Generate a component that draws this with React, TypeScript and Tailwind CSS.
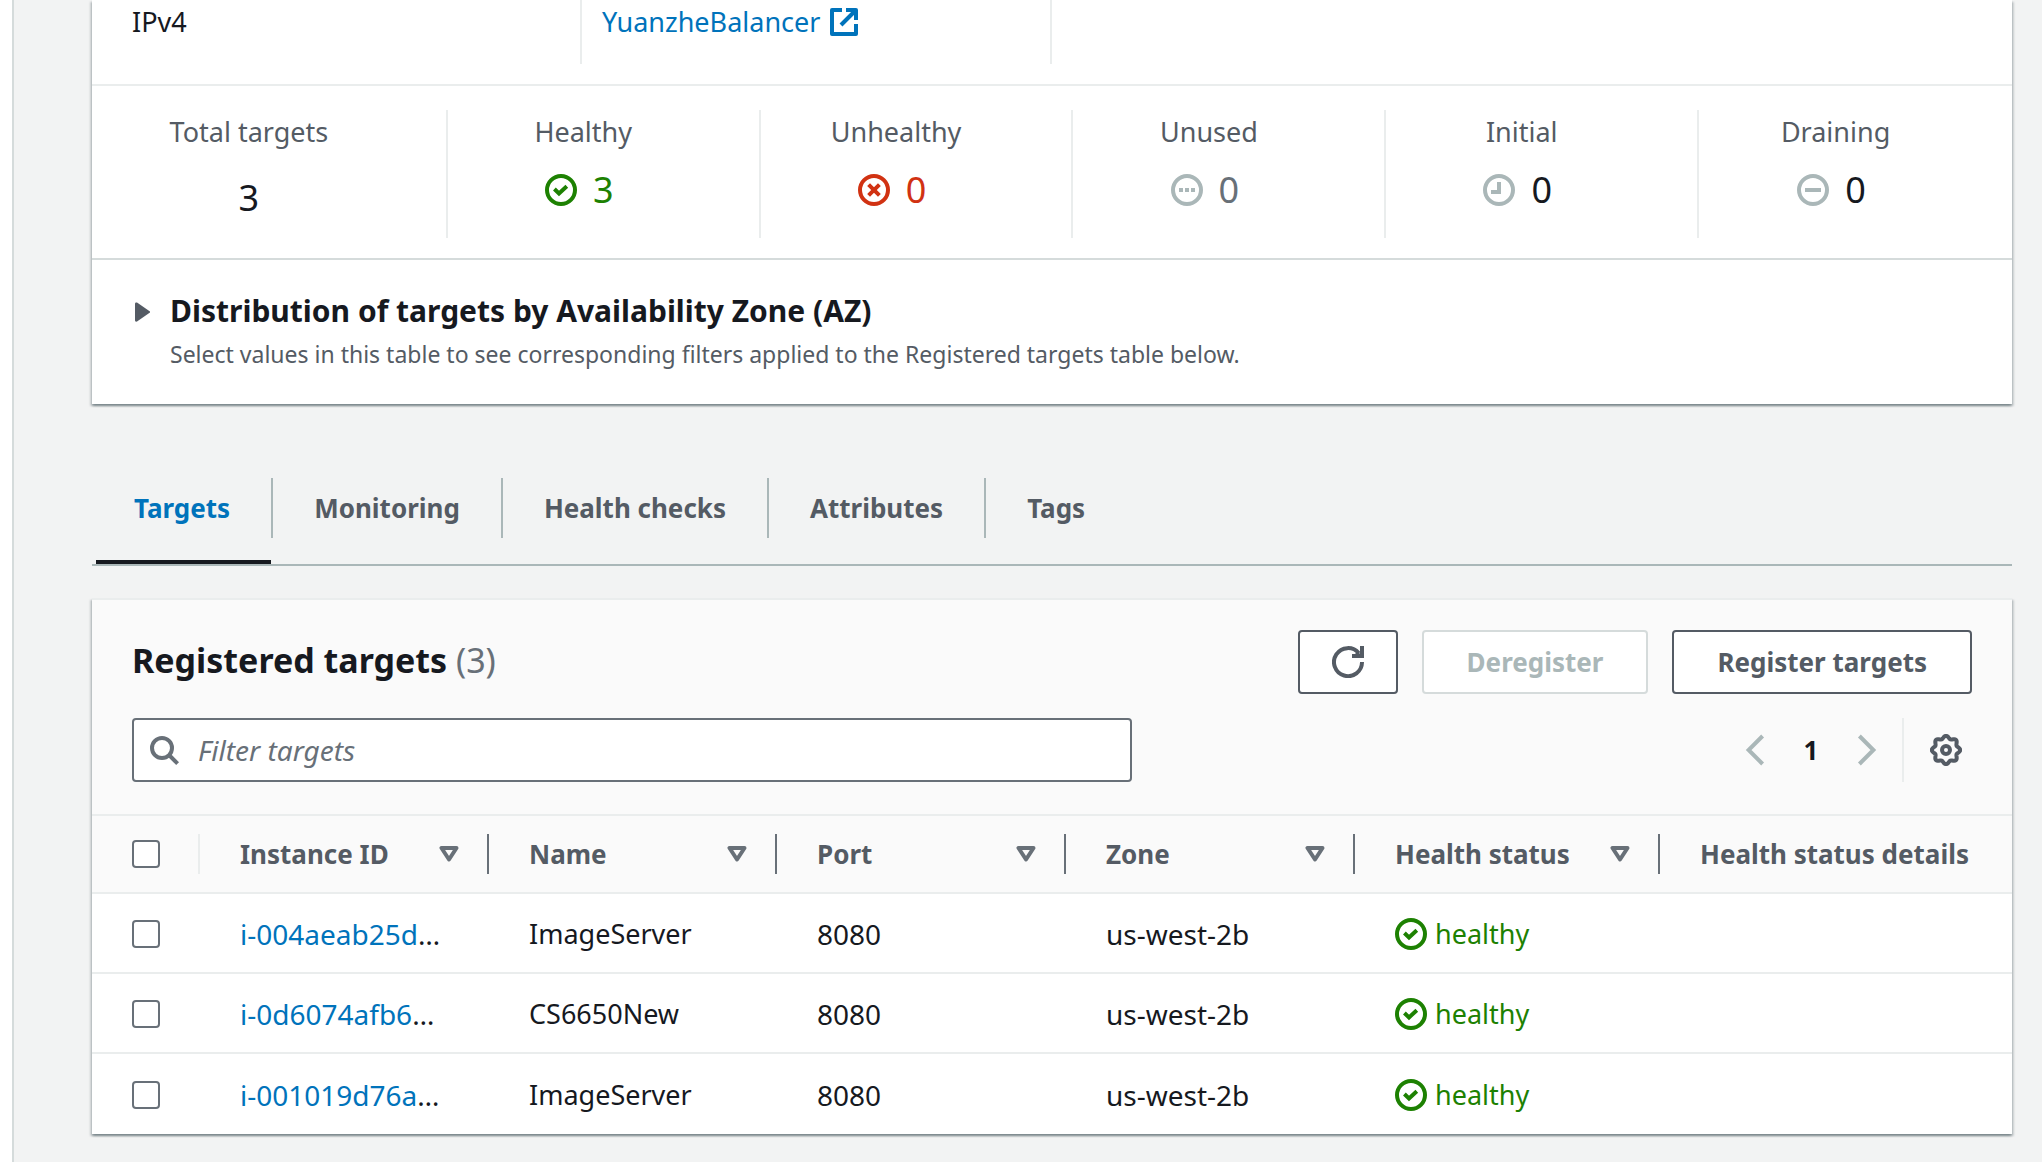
import React, { ReactNode } from "react";

const stats: { label: string; value: string; color: string; icon?: ReactNode }[] = [
  { label: "Total targets", value: "3", color: "pt-2 text-[#16191f]" },
  { label: "Healthy", value: "3", color: "pr-2 text-[#1d8102]", icon: <CheckCircle /> },
  { label: "Unhealthy", value: "0", color: "pr-2 text-[#d13212]", icon: <CrossCircle /> },
  { label: "Unused", value: "0", color: "pr-2 text-[#687078]", icon: <DotsCircle /> },
  { label: "Initial", value: "0", color: "pr-2 text-[#16191f]", icon: <ClockCircle /> },
  { label: "Draining", value: "0", color: "pr-2 text-[#16191f]", icon: <MinusCircle /> },
];

const rows = [
  { id: "i-004aeab25d", name: "ImageServer", port: "8080", zone: "us-west-2b", status: "healthy" },
  { id: "i-0d6074afb6", name: "CS6650New", port: "8080", zone: "us-west-2b", status: "healthy" },
  { id: "i-001019d76a", name: "ImageServer", port: "8080", zone: "us-west-2b", status: "healthy" },
];

const tabs = ["Targets", "Monitoring", "Health checks", "Attributes", "Tags"];

const columns = [
  { label: "Instance ID", width: "w-[289px]" },
  { label: "Name", width: "w-[288px]" },
  { label: "Port", width: "w-[289px]" },
  { label: "Zone", width: "w-[289px]" },
  { label: "Health status", width: "w-[305px]" },
];

const cardShadow =
  "shadow-[0_2px_2px_0_rgba(0,28,36,0.3),2px_2px_2px_0_rgba(0,28,36,0.15),-2px_2px_2px_0_rgba(0,28,36,0.15)]";

function Svg({ children, className = "" }: { children: ReactNode; className?: string }) {
  return (
    <svg viewBox="0 0 16 16" className={"size-8 shrink-0 fill-none stroke-2 " + className} aria-hidden="true">
      {children}
    </svg>
  );
}
function CheckCircle() {
  return (
    <Svg className="stroke-[#1d8102]">
      <circle cx="8" cy="8" r="7" />
      <path d="m4.7 7.5 2.3 2.2 3.9-3.6" />
    </Svg>
  );
}
function CrossCircle() {
  return (
    <Svg className="stroke-[#d13212]">
      <circle cx="8" cy="8" r="7" />
      <path d="m10.7 5.3-5.4 5.4M5.3 5.3l5.4 5.4" />
    </Svg>
  );
}
function DotsCircle() {
  return (
    <Svg className="stroke-[#aab7b8]">
      <circle cx="8" cy="8" r="7" />
      <path d="M4 8h2M7 8h2M10 8h2" />
    </Svg>
  );
}
function ClockCircle() {
  return (
    <Svg className="stroke-[#aab7b8]">
      <circle cx="8" cy="8" r="7" />
      <path d="M8 4v5H4" />
    </Svg>
  );
}
function MinusCircle() {
  return (
    <Svg className="stroke-[#aab7b8]">
      <circle cx="8" cy="8" r="7" />
      <path d="M4 8h8" />
    </Svg>
  );
}

const gearOutline =
  "M" +
  Array.from({ length: 96 }, (_, i) => {
    const a = (i / 96) * Math.PI * 2;
    const r = 6.4 + 0.7 * Math.cos(8 * a);
    return `${(8 + r * Math.cos(a)).toFixed(2)} ${(8 + r * Math.sin(a)).toFixed(2)}`;
  }).join("L") +
  "Z";

function Gear() {
  return (
    <Svg className="stroke-[#545b64]">
      <path d={gearOutline} />
      <circle cx="8" cy="8" r="2" />
    </Svg>
  );
}

function SortArrow() {
  return (
    <svg
      viewBox="0 0 20 16"
      className="h-4 w-5 shrink-0 fill-none stroke-[#687078] stroke-4 [stroke-linejoin:round]"
      aria-hidden="true"
    >
      <path d="M2.5 2h15L10 13.5Z" />
    </svg>
  );
}

function Checkbox({ label }: { label: string }) {
  return (
    <input
      type="checkbox"
      aria-label={label}
      className="block size-7 appearance-none rounded-sm border-2 border-[#687078] bg-white checked:bg-[#0073bb]"
    />
  );
}

export default function App() {
  return (
    <div className="flex min-h-screen bg-white font-['Noto_Sans','Open_Sans',sans-serif] text-[27px] leading-10 text-[#16191f]">
      <div className="w-3 shrink-0" />
      <main className="min-w-0 flex-1 border-l-2 border-[#d5dbdb] bg-[#f2f3f3] pr-[30px] pb-7 pl-[78px]">
        <section className={"bg-white " + cardShadow}>
          <div className="flex h-[84px] px-10">
            <div className="h-16 w-[450px] border-r-2 border-[#eaeded] pt-0.5">IPv4</div>
            <div className="h-16 w-[470px] border-r-2 border-[#eaeded] pt-0.5 pl-5">
              <a href="#balancer" className="flex items-center gap-2 text-[#0073bb]">
                YuanzheBalancer
                <Svg className="stroke-[#0073bb] [stroke-linejoin:round]">
                  <path d="M7 2H2v12h12V9M9 2h5v5" />
                  <path d="M14 2 6.5 9.5" />
                </Svg>
              </a>
            </div>
          </div>
          <div className="grid grid-cols-[356fr_313fr_313fr_313fr_313fr_313fr] border-y-2 border-t-[#eaeded] border-b-[#d5dbdb] pt-6 pb-5">
            {stats.map((s) => (
              <div
                key={s.label}
                className="flex h-32 flex-col items-center border-r-2 border-[#eaeded] pt-0.5 pr-10 last:border-0"
              >
                <span className="text-[#545b64]">{s.label}</span>
                <span className={"mt-2.5 flex items-center gap-4 text-4xl leading-[56px] " + s.color}>
                  {s.icon}
                  {s.value}
                </span>
              </div>
            ))}
          </div>
          <div className="flex px-10 py-8">
            <button aria-label="Expand distribution of targets" className="mr-5 flex h-10 items-center">
              <svg viewBox="0 0 18 20" className="h-5 w-[18px] fill-[#545b64]" aria-hidden="true">
                <path d="M3 1.5Q3 0 5 .5L18 9.5v1L5 19.5Q3 20 3 18.5Z" />
              </svg>
            </button>
            <div>
              <h2 className="text-[30px] leading-[38px] font-bold">
                Distribution of targets by Availability Zone (AZ)
              </h2>
              <p className="mt-1.5 text-[23px] leading-9 text-[#545b64]">
                Select values in this table to see corresponding filters applied to the Registered targets table below.
              </p>
            </div>
          </div>
        </section>

        <div
          role="tablist"
          className="mt-[74px] flex border-b-2 border-[#aab7b8] pl-1 text-[26px] font-bold text-[#545b64]"
        >
          {tabs.map((t, i) => (
            <React.Fragment key={t}>
              {i > 0 && <span className="h-[60px] w-0.5 bg-[#aab7b8]" />}
              <button
                role="tab"
                aria-selected={i === 0}
                className={
                  i === 0
                    ? "h-[86px] border-b-4 border-[#16191f] pr-[41px] pb-[22px] pl-[38px] text-[#0073bb]"
                    : "h-[86px] px-[41px] pb-[26px]"
                }
              >
                {t}
              </button>
            </React.Fragment>
          ))}
        </div>

        <section className={"mt-8 border-t-2 border-[#eaeded] bg-white " + cardShadow}>
          <div className="bg-[#fafafa] px-10 pt-[30px] pb-8">
            <div className="flex items-center gap-6">
              <h2 className="flex-1 pb-1 text-[34px] font-bold">
                Registered targets <span className="font-normal text-[#687078]">(3)</span>
              </h2>
              <button
                aria-label="Refresh"
                className="flex h-16 w-[100px] items-center justify-center rounded-sm border-2 border-[#545b64] bg-white"
              >
                <Svg className="stroke-[#545b64]">
                  <path d="M15 8a7 7 0 1 1-1.6-4.4" />
                  <path d="M15 0v5h-5" />
                  <path className="fill-[#545b64] stroke-none" d="m11.5 4 1.5-1.5L14 4Z" />
                </Svg>
              </button>
              <button
                disabled
                className="h-16 rounded-sm border-2 border-[#d5dbdb] bg-white px-[43px] text-[26px] font-bold text-[#aab7b8]"
              >
                Deregister
              </button>
              <button className="h-16 rounded-sm border-2 border-[#545b64] bg-white px-[43px] text-[26px] font-bold text-[#545b64]">
                Register targets
              </button>
            </div>
            <div className="mt-6 flex items-center justify-between">
              <label className="flex h-16 w-[1000px] items-center gap-[18px] rounded-sm border-2 border-[#687078] bg-white px-3.5">
                <Svg className="stroke-[#687078]">
                  <circle cx="7" cy="7" r="5" />
                  <path d="m10.5 10.5 4.3 4.3" />
                </Svg>
                <input
                  type="text"
                  aria-label="Filter targets"
                  placeholder="Filter targets"
                  className="min-w-0 flex-1 text-[28px] outline-none placeholder:text-[#687078] placeholder:italic"
                />
              </label>
              <div className="flex h-16 items-center">
                <button aria-label="Previous page">
                  <Svg className="stroke-[#aab7b8]">
                    <path d="m11.3 1-7 7 7 7" />
                  </Svg>
                </button>
                <button className="w-[78px] text-[26px] font-bold">1</button>
                <button aria-label="Next page">
                  <Svg className="stroke-[#aab7b8]">
                    <path d="m4.7 1 7 7-7 7" />
                  </Svg>
                </button>
                <div className="ml-5 flex h-16 items-center border-l-2 border-[#eaeded] pr-2.5 pl-[26px]">
                  <button aria-label="Preferences">
                    <Gear />
                  </button>
                </div>
              </div>
            </div>
          </div>
          <table className="w-full table-fixed border-separate border-spacing-0 text-left">
            <thead className="bg-[#fafafa] text-[26px] text-[#545b64]">
              <tr className="[&>th]:border-y-2 [&>th]:border-[#eaeded]">
                <th className="w-[108px] py-[18px]">
                  <div className="flex h-10 items-center border-r-2 border-[#eaeded] pl-10">
                    <Checkbox label="Select all targets" />
                  </div>
                </th>
                {columns.map((c) => (
                  <th key={c.label} className={"py-[18px] font-bold " + c.width}>
                    <div className="flex h-10 items-center justify-between border-r-2 border-[#687078] pr-7 pl-10">
                      {c.label}
                      <SortArrow />
                    </div>
                  </th>
                ))}
                <th className="pl-10 font-bold whitespace-nowrap">Health status details</th>
              </tr>
            </thead>
            <tbody>
              {rows.map((r) => (
                <tr
                  key={r.id}
                  className="h-20 [&>td]:border-[#eaeded] [&>td]:pt-0.5 not-last:[&>td]:border-b-2"
                >
                  <td className="pl-10">
                    <Checkbox label={"Select " + r.id} />
                  </td>
                  <td className="pl-10 text-[28px] whitespace-nowrap">
                    <a href={"#" + r.id} className="text-[#0073bb]">
                      {r.id}
                    </a>
                    …
                  </td>
                  <td className="pl-10">{r.name}</td>
                  <td className="pl-10 text-[28px]">{r.port}</td>
                  <td className="pl-10 text-[28px]">{r.zone}</td>
                  <td className="pl-10">
                    <span className="flex items-center gap-2 text-[#1d8102]">
                      <CheckCircle />
                      {r.status}
                    </span>
                  </td>
                  <td />
                </tr>
              ))}
            </tbody>
          </table>
        </section>
      </main>
    </div>
  );
}
